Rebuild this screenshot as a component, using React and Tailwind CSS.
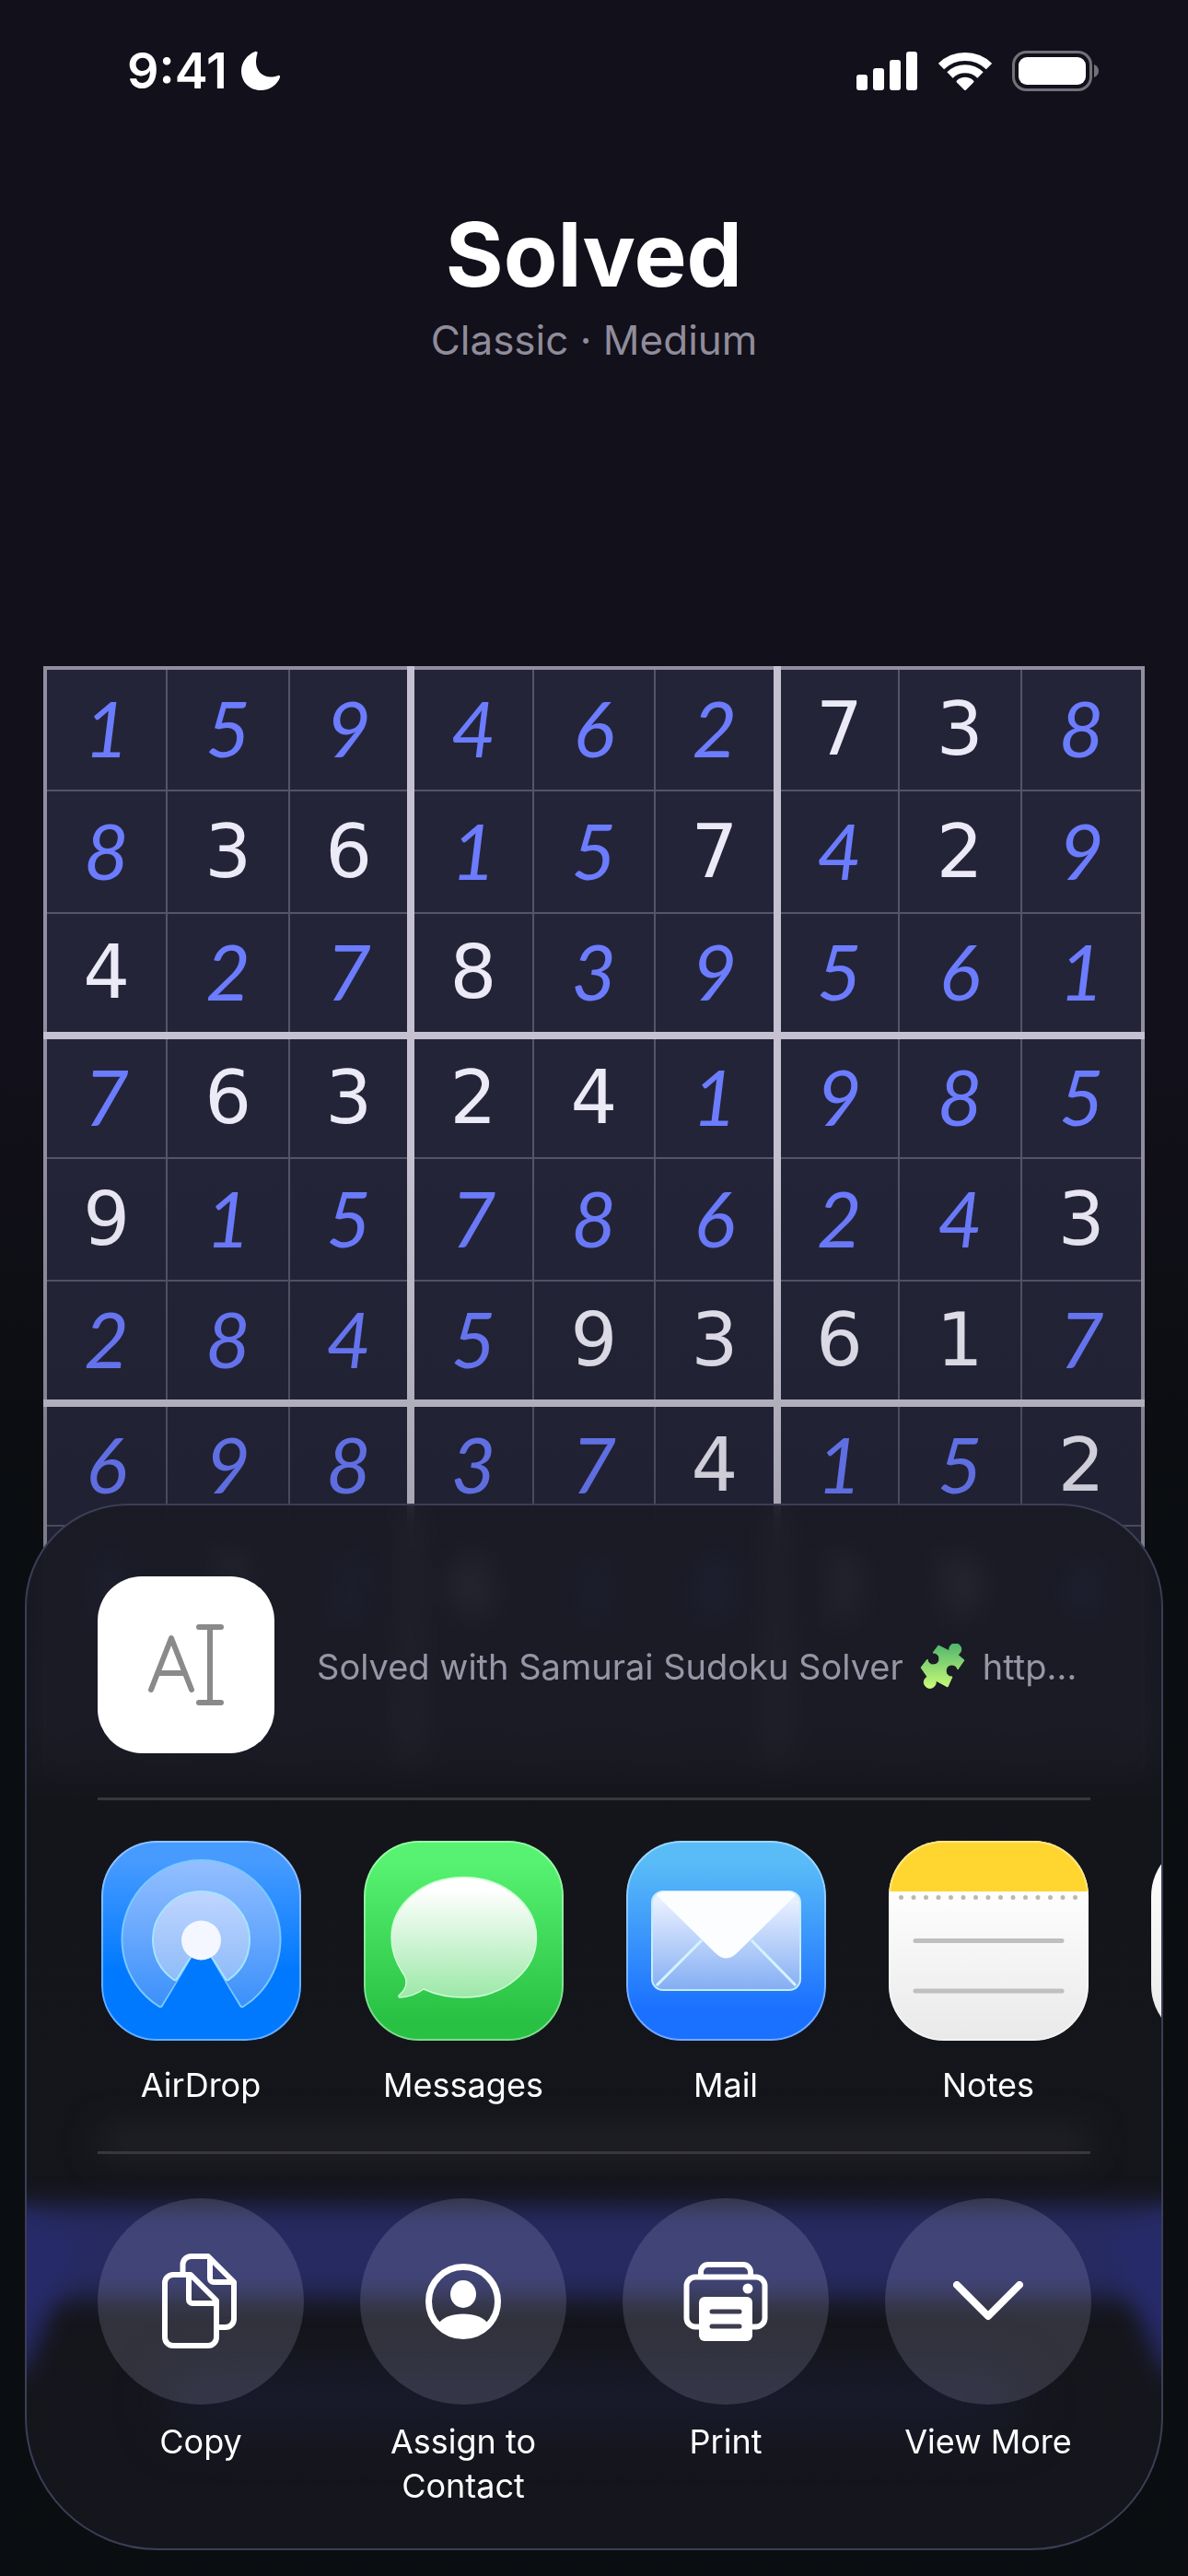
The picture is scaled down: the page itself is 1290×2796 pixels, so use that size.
const rows = [
  '159462738',
  '836157429',
  '427839561',
  '763241985',
  '915786243',
  '284593617',
  '698374152',
  '572618394',
  '         ',
]

// one flag per cell, 1 marks a digit printed in the puzzle
const givens = [
  '000000110',
  '011001010',
  '100100000',
  '011110000',
  '100000001',
  '000011110',
  '000001001',
  '010100110',
  '000000000',
]

function StatusBar() {
  return (
    <div className="flex items-center justify-between pt-11 pr-24 pl-[138px] text-white">
      <div className="flex items-center gap-[14px]">
        <span className="text-[54px] leading-[66px] font-semibold">9:41</span>
        <svg viewBox="0 0 44 44" className="size-11" fill="currentColor" aria-label="Do not disturb">
          <path d="M16 1C8 4 1 12 1 22c0 12 9 21 21 21 10 0 18-6 21-14 .5-1.5-.6-2.5-2-2-3 1-6 1.5-8 1.5-9.5 0-16-7-16-16 0-3 .5-6.500 1.500-9.500C19 1.500 17.500.5 16 1z" />
        </svg>
      </div>
      <div className="flex items-center gap-[22px]">
        <svg viewBox="0 0 67 44" className="h-11 w-[67px]" fill="currentColor" aria-label="Signal">
          <rect x="0" y="26" width="12" height="17" rx="3" />
          <rect x="18" y="19" width="12" height="24" rx="3" />
          <rect x="36" y="10" width="12" height="33" rx="3" />
          <rect x="54" y="1" width="12" height="42" rx="3" />
        </svg>
        <svg viewBox="0 0 58 44" className="h-11 w-[58px]" fill="none" stroke="currentColor" aria-label="Wi-Fi">
          <path d="M3 17A37.500 37.500 0 0 1 55 17" strokeWidth="9" />
          <path d="M12.500 26.500A23.500 23.500 0 0 1 45.500 26.500" strokeWidth="9" />
          <path d="M29 41.500L21 33.500A11.500 11.500 0 0 1 37 33.500Z" fill="currentColor" strokeWidth="3" strokeLinejoin="round" />
        </svg>
        <svg viewBox="0 0 95 44" className="h-11 w-[95px]" aria-label="Battery">
          <rect x="1.500" y="1.500" width="84" height="41" rx="14" fill="none" stroke="#737078" strokeWidth="3" />
          <rect x="7" y="7" width="73" height="30" rx="9" fill="white" />
          <path d="M89 15c3.500 1.500 5 4 5 7s-1.500 5.500-5 7z" fill="#737078" />
        </svg>
      </div>
    </div>
  )
}

function Cell({ value, given, row, col }) {
  const right = col === 2 || col === 5 ? 'border-r-8 border-r-[#c5c1d0]' : col === 8 ? 'border-r-4 border-r-[#928ea0]' : 'border-r-2 border-r-[#565466]'
  const bottom = row === 2 || row === 5 ? 'border-b-8 border-b-[#c5c1d0]' : row === 8 ? 'border-b-4 border-b-[#928ea0]' : 'border-b-2 border-b-[#565466]'
  const digit = given
    ? "font-['DejaVu_Sans',sans-serif] text-[80px] text-[#eceaf6]"
    : "pb-1 font-['Lato',sans-serif] text-[84px] italic text-[#6c7cff]"
  return <td className={`h-[133px] text-center align-middle leading-[100px] ${right} ${bottom} ${digit}`}>{value}</td>
}

function Board() {
  return (
    <table className="w-full table-fixed border-collapse border-4 border-[#928ea0] bg-[#242438]">
      <tbody>
        {rows.map((line, row) => (
          <tr key={row}>
            {line.split('').map((value, col) => (
              <Cell key={col} value={value} given={givens[row][col] === '1'} row={row} col={col} />
            ))}
          </tr>
        ))}
      </tbody>
    </table>
  )
}

function AirDropIcon() {
  return (
    <svg viewBox="0 0 217 217" className="size-full">
      <defs>
        <linearGradient id="airdrop-bg" x1="0" y1="0" x2="0" y2="1">
          <stop offset="0.1" stopColor="#479bff" />
          <stop offset="0.65" stopColor="#0079ff" />
        </linearGradient>
        <linearGradient id="airdrop-outer" x1="0" y1="0" x2="0" y2="1">
          <stop offset="0" stopColor="#94bfff" />
          <stop offset="1" stopColor="#3a90fb" />
        </linearGradient>
        <linearGradient id="airdrop-inner" x1="0" y1="0" x2="0" y2="1">
          <stop offset="0" stopColor="#bfd5ff" />
          <stop offset="1" stopColor="#8fbcf9" />
        </linearGradient>
      </defs>
      <rect width="217" height="217" fill="url(#airdrop-bg)" />
      <path d="M63 180A86 86 0 1 1 154 180Q152 181 151 179L119 128H98L66 179Q65 181 63 180Z" fill="url(#airdrop-outer)" stroke="#7cc8ff" strokeWidth="2" />
      <path d="M79 151A52.500 52.500 0 1 1 138 151Q136 152 135 150L121 128H96L82 150Q81 152 79 151Z" fill="url(#airdrop-inner)" stroke="#a5e4ff" strokeWidth="2" />
      <path d="M98 127L68 178H149L119 127Z" fill="#0079ff" />
      <circle cx="108.500" cy="108" r="21.500" fill="#f4f7ff" />
    </svg>
  )
}

function MessagesIcon() {
  return (
    <svg viewBox="0 0 217 217" className="size-full">
      <defs>
        <linearGradient id="messages-bg" x1="0" y1="0" x2="0" y2="1">
          <stop offset="0.1" stopColor="#57f271" />
          <stop offset="0.9" stopColor="#29c143" />
        </linearGradient>
        <linearGradient id="messages-bubble" x1="0" y1="0" x2="0" y2="1">
          <stop offset="0.1" stopColor="#ffffff" />
          <stop offset="1" stopColor="#9de8a8" />
        </linearGradient>
      </defs>
      <rect width="217" height="217" fill="url(#messages-bg)" />
      <path
        d="M108.500 39.500C65 39.500 30 68.500 30 105c0 18 7 31 14 41 4 7 2 15-5 21-2 2-1 3 1 3 9-.5 18-4 25-9 13 6 27 9 43.500 9C152 170 187.500 141 187.500 105S152 39.500 108.500 39.500z"
        fill="url(#messages-bubble)"
        stroke="#c9ffd2"
        strokeWidth="1.5"
      />
    </svg>
  )
}

function MailIcon() {
  return (
    <svg viewBox="0 0 217 217" className="size-full">
      <defs>
        <linearGradient id="mail-bg" x1="0" y1="0" x2="0" y2="1">
          <stop offset="0.1" stopColor="#5abcf7" />
          <stop offset="0.85" stopColor="#1a70ff" />
        </linearGradient>
        <linearGradient id="mail-paper" x1="0" y1="0" x2="0" y2="1">
          <stop offset="0.1" stopColor="#e8efff" />
          <stop offset="1" stopColor="#83aef3" />
        </linearGradient>
      </defs>
      <rect width="217" height="217" fill="url(#mail-bg)" />
      <rect x="28" y="55" width="161" height="107" rx="12" fill="url(#mail-paper)" stroke="#c5ecff" strokeWidth="2" />
      <path d="M33 157L82 108M184 157L136 108" stroke="#d5f3ff" strokeWidth="3" />
      <path d="M33 59Q36 55 42 55H175Q181 55 184 59L120 122Q108.500 133 97 122Z" fill="#fcfdff" />
    </svg>
  )
}

function NotesIcon() {
  return (
    <svg viewBox="0 0 217 217" className="size-full">
      <defs>
        <linearGradient id="notes-bg" x1="0" y1="0" x2="0" y2="1">
          <stop offset="0.25" stopColor="#fefefe" />
          <stop offset="1" stopColor="#e9e9e9" />
        </linearGradient>
      </defs>
      <rect width="217" height="217" fill="url(#notes-bg)" />
      <rect width="217" height="55" fill="#ffd530" />
      <path d="M13.500 61.500H205" stroke="#bdb9aa" strokeWidth="5" strokeLinecap="round" strokeDasharray="0 13.5" />
      <path d="M29 108.500H188M29 163H188" stroke="#bfbfbf" strokeWidth="5" strokeLinecap="round" />
    </svg>
  )
}

function CopyIcon() {
  return (
    <svg viewBox="0 0 84 104" className="h-[104px] w-[84px]" fill="none" stroke="white" strokeWidth="6" strokeLinejoin="round">
      <path d="M22.500 22V12a9 9 0 0 1 9-9H50L78 31V71a9 9 0 0 1-9 9H60" />
      <path d="M52 4V27a4 4 0 0 0 4 4H77" />
      <path d="M12 23H31L59 51V91a9 9 0 0 1-9 9H12a9 9 0 0 1-9-9V32a9 9 0 0 1 9-9z" />
      <path d="M29 24V50a4 4 0 0 0 4 4H58" />
    </svg>
  )
}

function ContactIcon() {
  return (
    <svg viewBox="0 0 82 82" className="size-[82px]" fill="white">
      <circle cx="41" cy="41" r="37.500" fill="none" stroke="white" strokeWidth="7" />
      <ellipse cx="41" cy="33" rx="14" ry="15" />
      <path d="M13 66C19 58 29 54.500 41 54.500S63 58 69 66C62 74 52 79 41 79S20 74 13 66z" />
    </svg>
  )
}

function PrintIcon() {
  return (
    <svg viewBox="0 0 92 86" className="h-[86px] w-[92px]" fill="none">
      <path d="M19 14V11a8 8 0 0 1 8-8H65a8 8 0 0 1 8 8V14" stroke="white" strokeWidth="6" />
      <path d="M18 70.500H13a9.500 9.500 0 0 1-9.500-9.500V26A9.500 9.500 0 0 1 13 16.500H79A9.500 9.500 0 0 1 88.500 26V61A9.500 9.500 0 0 1 79 70.500H74" stroke="white" strokeWidth="6" />
      <circle cx="70" cy="29" r="5.500" fill="white" />
      <rect x="17" y="38" width="58" height="48" rx="6" fill="white" />
      <path d="M31 54H61M31 70H61" stroke="#3d3d52" strokeWidth="5" strokeLinecap="round" />
    </svg>
  )
}

function MoreIcon() {
  return (
    <svg viewBox="0 0 76 44" className="h-11 w-[76px]" fill="none">
      <path d="M4 4L38 38L72 4" stroke="white" strokeWidth="8" strokeLinecap="round" strokeLinejoin="round" />
    </svg>
  )
}

function PuzzleIcon() {
  return (
    <svg viewBox="0 0 50 50" className="size-[50px] shrink-0" aria-label="Puzzle piece">
      <defs>
        <linearGradient id="puzzle" x1="0" y1="0" x2="0" y2="1">
          <stop offset="0" stopColor="#4fb56c" />
          <stop offset="1" stopColor="#c9fb78" />
        </linearGradient>
      </defs>
      <path
        d="M20 2L32 8A6.500 6.500 0 1 1 41 12L48 18L41 28A6.500 6.500 0 1 0 35 36L30 47L17 40A6.500 6.500 0 1 1 8 36L1 26L8 17A6.500 6.500 0 1 0 14 10Z"
        fill="url(#puzzle)"
        stroke="url(#puzzle)"
        strokeWidth="1"
        strokeLinejoin="round"
      />
    </svg>
  )
}

const apps = [
  { name: 'AirDrop', icon: <AirDropIcon /> },
  { name: 'Messages', icon: <MessagesIcon /> },
  { name: 'Mail', icon: <MailIcon /> },
  { name: 'Notes', icon: <NotesIcon /> },
]

const actions = [
  { name: 'Copy', icon: <CopyIcon /> },
  { name: 'Assign to Contact', icon: <ContactIcon /> },
  { name: 'Print', icon: <PrintIcon /> },
  { name: 'View More', icon: <MoreIcon /> },
]

function Glow() {
  return (
    <div className="absolute inset-0 -z-10">
      <div className="absolute inset-x-20 bottom-[424px] h-8 bg-[#222227] blur-[18px]" />
      <div className="absolute -inset-x-8 bottom-[272px] h-[100px] bg-[#262a60] blur-[14px]" />
      <div className="absolute bottom-[200px] -left-16 h-[160px] w-24 rotate-[24deg] bg-[#262a68] blur-[12px]" />
      <div className="absolute -right-16 bottom-[200px] h-[160px] w-24 -rotate-[24deg] bg-[#262a68] blur-[12px]" />
      <div className="absolute inset-x-40 bottom-[136px] h-12 bg-[#1a1c32] blur-[28px]" />
    </div>
  )
}

function ShareSheet() {
  return (
    <section
      aria-label="Share"
      className="fixed inset-x-[27px] bottom-7 overflow-hidden rounded-t-[112px] rounded-b-[144px] border-2 border-[#3b3e55] bg-[linear-gradient(to_bottom,#191923d9_0,#1a1a24d9_240px,#15161bf2_330px,#16171ef2_100%)] px-[77px] backdrop-blur-[16px]"
    >
      <Glow />

      <div className="flex items-center gap-[46px] pt-[77px] pb-12">
        <div className="flex size-48 shrink-0 items-center justify-center rounded-[48px] bg-white">
          <svg viewBox="0 0 82 88" className="h-[88px] w-[82px]" fill="none" stroke="#8a8a8a" strokeWidth="6" strokeLinecap="round" strokeLinejoin="round">
            <path d="M3 71L25 15L47 71M10 53H40" />
            <path d="M67 4V84M55 3H79M55 85H79" />
          </svg>
        </div>
        <p className="flex items-center gap-[18px] pt-1 text-[38px] leading-[52px] whitespace-nowrap text-[#9896a6]">
          Solved with Samurai Sudoku Solver <PuzzleIcon /> http…
        </p>
      </div>

      <hr className="h-[3px] border-0 bg-[#37373d]" />

      <div className="flex gap-[61px] pt-11 pb-12">
        {apps.map((app) => (
          <button key={app.name} type="button" className="flex w-56 shrink-0 flex-col items-center gap-6">
            <span className="relative block size-[217px] overflow-hidden rounded-[60px]">
              {app.icon}
              <span className="absolute inset-0 rounded-[60px] border-2 border-white/40" />
            </span>
            <span className="text-[36px] leading-[48px]">{app.name}</span>
          </button>
        ))}
        <button type="button" aria-label="More apps" className="flex w-56 shrink-0 flex-col items-center">
          <span className="block size-[217px] rounded-[60px] bg-gradient-to-b from-white to-[#e9e9e9]" />
        </button>
      </div>

      <hr className="h-[3px] border-0 bg-[#37373d]" />

      <div className="flex items-start gap-[61px] pt-12 pb-11">
        {actions.map((action) => (
          <button key={action.name} type="button" className="flex w-56 shrink-0 flex-col items-center gap-4">
            <span className="flex size-56 items-center justify-center rounded-full bg-[#e0e0ff]/15">{action.icon}</span>
            <span className="px-4 text-[36px] leading-[48px]">{action.name}</span>
          </button>
        ))}
      </div>
    </section>
  )
}

export default function App() {
  return (
    <main className="relative min-h-screen overflow-hidden bg-[linear-gradient(to_bottom,#12101a_1150px,#0b0d11_1600px)] font-['Inter',sans-serif] text-white">
      <StatusBar />
      <header className="pt-[104px] pb-[327px] text-center">
        <h1 className="text-[96px] leading-[124px] font-bold">Solved</h1>
        <p className="mt-1 text-[44px] leading-[54px] text-[#908c9b]">Classic · Medium</p>
      </header>
      <div className="px-[47px]">
        <Board />
      </div>
      <div className="pointer-events-none absolute inset-0 bg-[linear-gradient(to_bottom,transparent_1250px,#0a0f1226_1640px)]" />
      <ShareSheet />
    </main>
  )
}
